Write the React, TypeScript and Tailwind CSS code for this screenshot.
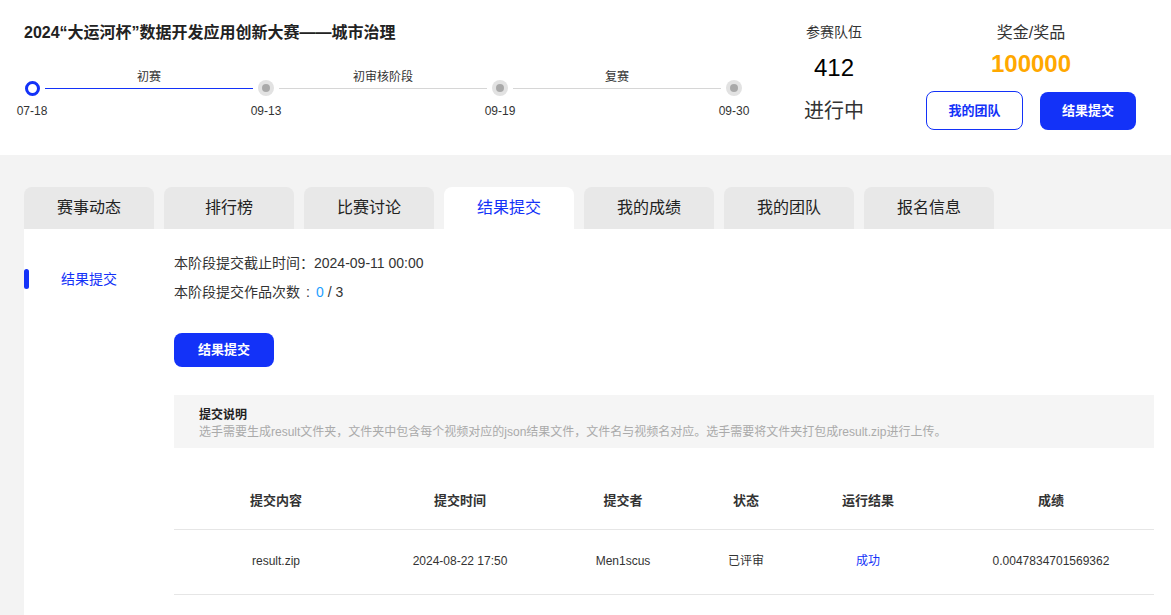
import React from "react";

const FONT = { fontFamily: '"Liberation Sans", "Noto Sans CJK SC", Arial, sans-serif' };

function GrayDot() {
  return (
    <div className="w-4 h-4 rounded-full bg-[#e2e2e2] flex items-center justify-center shrink-0">
      <div className="w-2 h-2 rounded-full bg-[#a9a9a9]" />
    </div>
  );
}

function BlueDot() {
  return (
    <div className="w-4 h-4 flex items-center justify-center shrink-0">
      <div className="w-[15px] h-[15px] rounded-full border-[3px] border-[#1332f8] bg-white" />
    </div>
  );
}

function DotCol({ date, active }: { date: string; active?: boolean }) {
  return (
    <div className="w-4 flex flex-col items-center shrink-0">
      <div className="h-[11px]" />
      {active ? <BlueDot /> : <GrayDot />}
      <div className="mt-[7px] text-[12px] leading-[16px] text-[#333] whitespace-nowrap">{date}</div>
    </div>
  );
}

function LineCol({ label, active }: { label: string; active?: boolean }) {
  return (
    <div className="w-[218px] flex flex-col items-center shrink-0">
      <div className="text-[12px] leading-[16px] text-[#333] h-[16px] whitespace-nowrap">{label}</div>
      <div className={`mt-[3px] h-px w-[208px] ${active ? "bg-[#1332f8]" : "bg-[#d6d6d6]"}`} />
    </div>
  );
}

const tabs = ["赛事动态", "排行榜", "比赛讨论", "结果提交", "我的成绩", "我的团队", "报名信息"];

export default function App() {
  return (
    <div style={FONT} className="w-[1171px] h-[615px] overflow-hidden bg-[#f3f3f3]">
      {/* Header */}
      <div className="bg-white h-[155px] flex">
        <div className="w-[760px] ml-[24px] pt-[21px]">
          <div className="text-[16px] leading-[24px] font-bold text-[#222]">
            2024“大运河杯”数据开发应用创新大赛——城市治理
          </div>
          <div className="mt-[24px] flex items-start">
            <DotCol date="07-18" active />
            <LineCol label="初赛" active />
            <DotCol date="09-13" />
            <LineCol label="初审核阶段" />
            <DotCol date="09-19" />
            <LineCol label="复赛" />
            <DotCol date="09-30" />
          </div>
        </div>
        <div className="w-[100px] flex flex-col items-center pt-[22px]">
          <div className="text-[14px] leading-[20px] text-[#333]">参赛队伍</div>
          <div className="mt-[12px] text-[24px] leading-[28px] text-black">412</div>
          <div className="mt-[16px] text-[20px] leading-[26px] text-[#333]">进行中</div>
        </div>
        <div className="ml-[42px] w-[210px] flex flex-col items-center pt-[22px]">
          <div className="text-[16px] leading-[22px] text-[#333]">奖金/奖品</div>
          <div className="mt-[6px] text-[24px] leading-[28px] font-bold text-[#ffa800]">100000</div>
          <div className="mt-[13px] flex items-center gap-[17px]">
            <button className="w-[97px] h-[39px] rounded-[8px] border border-[#1332f8] bg-white text-[#1332f8] text-[13px] font-bold">
              我的团队
            </button>
            <button className="w-[96px] h-[38px] rounded-[8px] bg-[#1332f8] text-white text-[13px] font-bold">
              结果提交
            </button>
          </div>
        </div>
      </div>

      {/* Tabs */}
      <div className="pt-[32px] pl-[24px] flex gap-[10px]">
        {tabs.map((t) => (
          <div
            key={t}
            className={`w-[130px] h-[42px] rounded-t-[8px] flex items-center justify-center text-[16px] ${
              t === "结果提交" ? "bg-white text-[#1332f8]" : "bg-[#e8e8e8] text-[#222]"
            }`}
          >
            {t}
          </div>
        ))}
      </div>

      {/* Content */}
      <div className="ml-[24px] bg-white h-[400px] flex">
        <div className="w-[150px] pt-[40px] flex h-[100px] self-start">
          <div className="w-[5px] h-[20px] rounded-full bg-[#1332f8]" />
          <div className="ml-[32px] text-[14px] leading-[20px] text-[#1332f8]">结果提交</div>
        </div>
        <div className="w-[980px] pt-[24px]">
          <div className="text-[14px] leading-[20px] text-[#333]">本阶段提交截止时间：2024-09-11 00:00</div>
          <div className="mt-[9px] text-[14px] leading-[20px] text-[#333]">
            本阶段提交作品次数<span className="inline-block w-[16px] text-center">:</span>
            <span className="text-[#1ea0ff]">0</span> / 3
          </div>
          <button className="mt-[31px] w-[100px] h-[34px] rounded-[8px] bg-[#1332f8] text-white text-[13px] font-bold">
            结果提交
          </button>
          <div className="mt-[28px] h-[53px] bg-[#f5f5f5] pl-[25px] pt-[12px]">
            <div className="text-[12px] leading-[17px] font-bold text-[#222]">提交说明</div>
            <div className="text-[12px] leading-[17px] text-[#aaa]">
              选手需要生成result文件夹，文件夹中包含每个视频对应的json结果文件，文件名与视频名对应。选手需要将文件夹打包成result.zip进行上传。
            </div>
          </div>
          <div className="mt-[24px]">
            <div className="grid grid-cols-[204px_164px_162px_84px_160px_206px] h-[58px] items-center text-center text-[13px] font-bold text-[#333] border-b border-[#e6e6e6]">
              <div>提交内容</div>
              <div>提交时间</div>
              <div>提交者</div>
              <div>状态</div>
              <div>运行结果</div>
              <div>成绩</div>
            </div>
            <div className="grid grid-cols-[204px_164px_162px_84px_160px_206px] h-[65px] pb-[2px] items-center text-center text-[12px] text-[#333] border-b border-[#e6e6e6]">
              <div>result.zip</div>
              <div>2024-08-22 17:50</div>
              <div>Men1scus</div>
              <div>已评审</div>
              <div className="text-[#1332f8]">成功</div>
              <div>0.0047834701569362</div>
            </div>
          </div>
        </div>
      </div>
    </div>
  );
}
